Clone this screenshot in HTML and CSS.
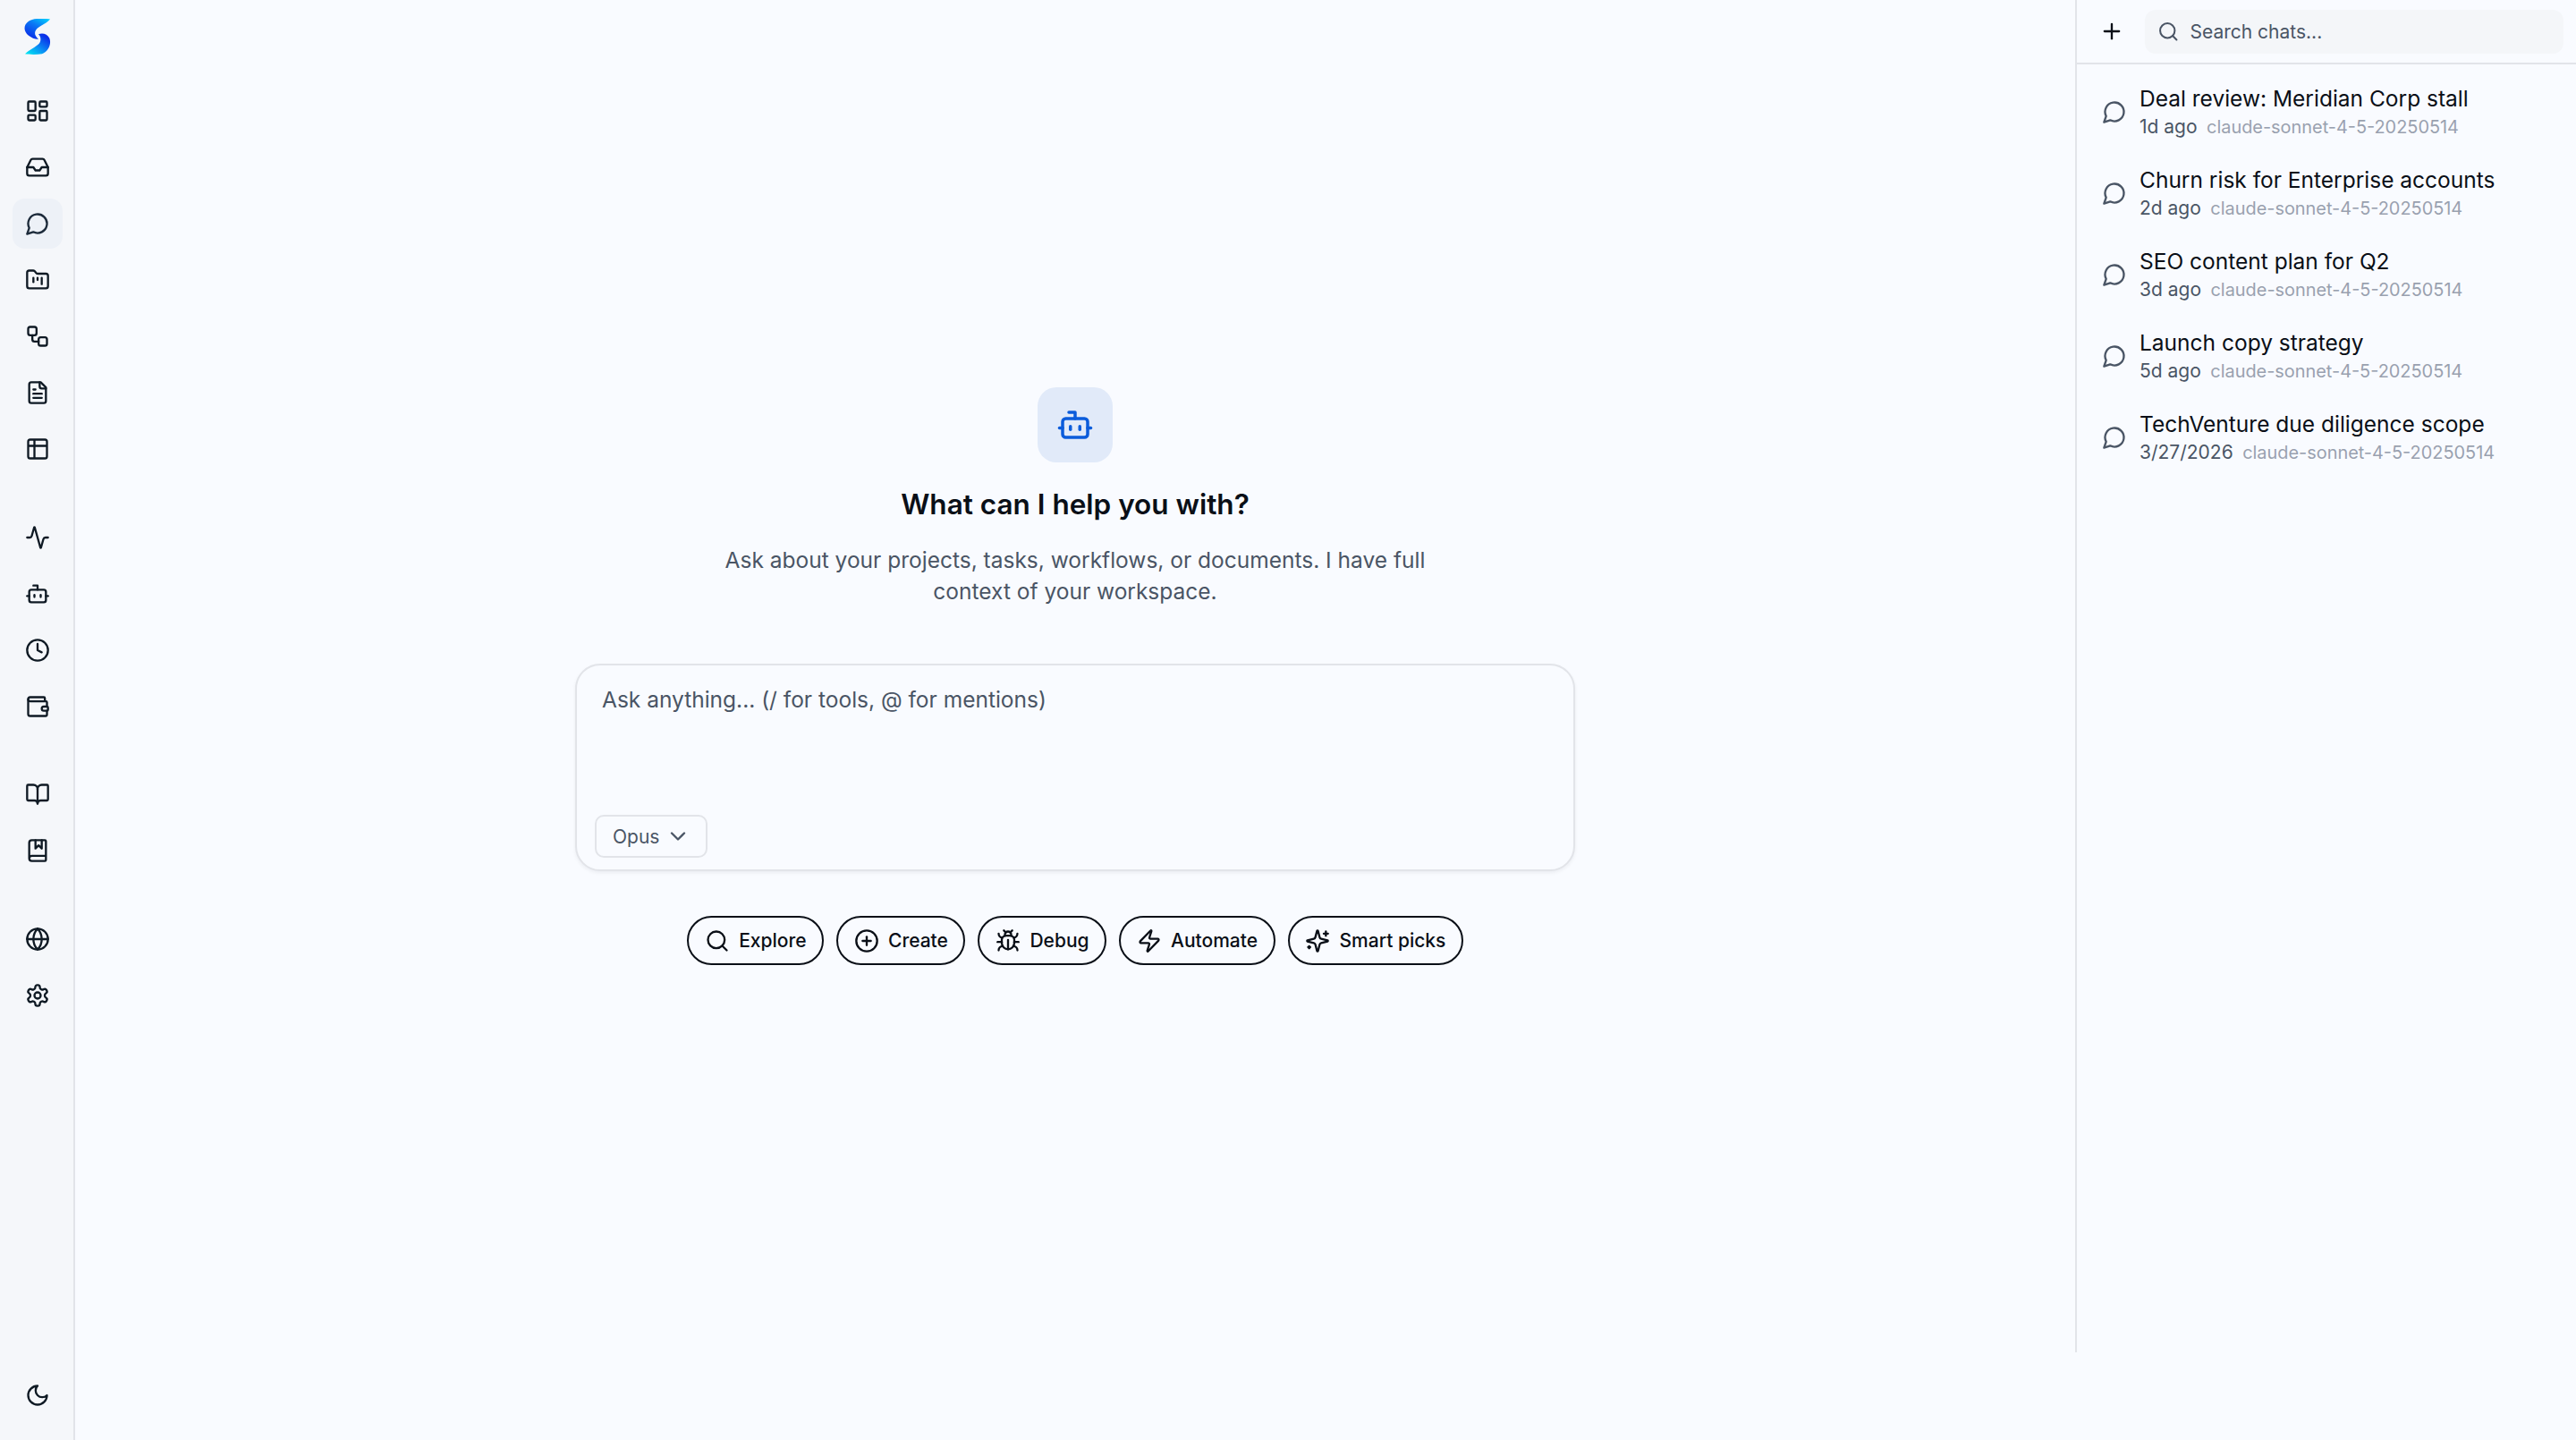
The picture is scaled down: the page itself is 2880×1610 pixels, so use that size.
FILE: index.html
```html
<!DOCTYPE html>
<html lang="en">
<head>
<meta charset="utf-8">
<title>Chat</title>
<link rel="stylesheet" href="styles.css">
</head>
<body>
<svg class="defs" aria-hidden="true">
  <defs>
    <linearGradient id="logoTop" x1="0.95" y1="0" x2="0.3" y2="1"><stop offset="0" stop-color="#00d4ff"/><stop offset="0.45" stop-color="#0a78f5"/><stop offset="1" stop-color="#0a2ee8"/></linearGradient>
    <linearGradient id="logoBottom" x1="0" y1="1" x2="0.75" y2="0.1"><stop offset="0" stop-color="#00f0f0"/><stop offset="0.5" stop-color="#0a90f5"/><stop offset="1" stop-color="#0a30e8"/></linearGradient>
    <symbol id="i-dashboard" viewBox="0 0 24 24"><rect x="3" y="3" width="7" height="9" rx="1"/><rect x="14" y="3" width="7" height="5" rx="1"/><rect x="14" y="12" width="7" height="9" rx="1"/><rect x="3" y="16" width="7" height="5" rx="1"/></symbol>
    <symbol id="i-inbox" viewBox="0 0 24 24"><polyline points="22 12 16 12 14 15 10 15 8 12 2 12"/><path d="M5.45 5.11 2 12v6a2 2 0 0 0 2 2h16a2 2 0 0 0 2-2v-6l-3.45-6.89A2 2 0 0 0 16.76 4H7.24a2 2 0 0 0-1.79 1.11z"/></symbol>
    <symbol id="i-chat" viewBox="0 0 24 24"><path d="M7.9 20A9 9 0 1 0 4 16.1L2 22Z"/></symbol>
    <symbol id="i-folder" viewBox="0 0 24 24"><path d="M4 20h16a2 2 0 0 0 2-2V8a2 2 0 0 0-2-2h-7.93a2 2 0 0 1-1.66-.9l-.82-1.2A2 2 0 0 0 7.93 3H4a2 2 0 0 0-2 2v13c0 1.1.9 2 2 2Z"/><path d="M8 10v4"/><path d="M12 10v2"/><path d="M16 10v6"/></symbol>
    <symbol id="i-workflow" viewBox="0 0 24 24"><rect x="3" y="3" width="8" height="8" rx="2"/><path d="M7 11v4a2 2 0 0 0 2 2h4"/><rect x="13" y="13" width="8" height="8" rx="2"/></symbol>
    <symbol id="i-file" viewBox="0 0 24 24"><path d="M15 2H6a2 2 0 0 0-2 2v16a2 2 0 0 0 2 2h12a2 2 0 0 0 2-2V7Z"/><path d="M14 2v4a2 2 0 0 0 2 2h4"/><path d="M10 9H8"/><path d="M16 13H8"/><path d="M16 17H8"/></symbol>
    <symbol id="i-table" viewBox="0 0 24 24"><path d="M9 3H5a2 2 0 0 0-2 2v4m6-6h10a2 2 0 0 1 2 2v4M9 3v18m0 0h10a2 2 0 0 0 2-2V9M9 21H5a2 2 0 0 1-2-2V9m0 0h18"/></symbol>
    <symbol id="i-activity" viewBox="0 0 24 24"><path d="M22 12h-2.48a2 2 0 0 0-1.93 1.46l-2.35 8.36a.25.25 0 0 1-.48 0L9.24 2.18a.25.25 0 0 0-.48 0l-2.35 8.36A2 2 0 0 1 4.49 12H2"/></symbol>
    <symbol id="i-bot" viewBox="0 0 24 24"><path d="M12 8V4H8"/><rect x="4" y="8" width="16" height="12" rx="2"/><path d="M2 14h2"/><path d="M20 14h2"/><path d="M15 13v2"/><path d="M9 13v2"/></symbol>
    <symbol id="i-clock" viewBox="0 0 24 24"><circle cx="12" cy="12" r="10"/><polyline points="12 6 12 12 16 14"/></symbol>
    <symbol id="i-wallet" viewBox="0 0 24 24"><path d="M19 7V4a1 1 0 0 0-1-1H5a2 2 0 0 0 0 4h15a1 1 0 0 1 1 1v4h-3a2 2 0 0 0 0 4h3a1 1 0 0 0 1-1v-2a1 1 0 0 0-1-1"/><path d="M3 5v14a2 2 0 0 0 2 2h15a1 1 0 0 0 1-1v-4"/></symbol>
    <symbol id="i-book" viewBox="0 0 24 24"><path d="M12 7v14"/><path d="M3 18a1 1 0 0 1-1-1V4a1 1 0 0 1 1-1h5a4 4 0 0 1 4 4 4 4 0 0 1 4-4h5a1 1 0 0 1 1 1v13a1 1 0 0 1-1 1h-6a3 3 0 0 0-3 3 3 3 0 0 0-3-3z"/></symbol>
    <symbol id="i-bookmark" viewBox="0 0 24 24"><path d="M10 2v8l3-3 3 3V2"/><path d="M4 19.5v-15A2.5 2.5 0 0 1 6.5 2H19a1 1 0 0 1 1 1v18a1 1 0 0 1-1 1H6.5a1 1 0 0 1 0-5H20"/></symbol>
    <symbol id="i-globe" viewBox="0 0 24 24"><circle cx="12" cy="12" r="10"/><path d="M12 2a14.5 14.5 0 0 0 0 20 14.5 14.5 0 0 0 0-20"/><path d="M2 12h20"/></symbol>
    <symbol id="i-settings" viewBox="0 0 24 24"><path d="M12.22 2h-.44a2 2 0 0 0-2 2v.18a2 2 0 0 1-1 1.73l-.43.25a2 2 0 0 1-2 0l-.15-.08a2 2 0 0 0-2.73.73l-.22.38a2 2 0 0 0 .73 2.73l.15.1a2 2 0 0 1 1 1.72v.51a2 2 0 0 1-1 1.74l-.15.09a2 2 0 0 0-.73 2.73l.22.38a2 2 0 0 0 2.73.73l.15-.08a2 2 0 0 1 2 0l.43.25a2 2 0 0 1 1 1.73V20a2 2 0 0 0 2 2h.44a2 2 0 0 0 2-2v-.18a2 2 0 0 1 1-1.73l.43-.25a2 2 0 0 1 2 0l.15.08a2 2 0 0 0 2.73-.73l.22-.39a2 2 0 0 0-.73-2.73l-.15-.08a2 2 0 0 1-1-1.74v-.5a2 2 0 0 1 1-1.74l.15-.09a2 2 0 0 0 .73-2.73l-.22-.38a2 2 0 0 0-2.73-.73l-.15.08a2 2 0 0 1-2 0l-.43-.25a2 2 0 0 1-1-1.73V4a2 2 0 0 0-2-2z"/><circle cx="12" cy="12" r="3"/></symbol>
    <symbol id="i-moon" viewBox="0 0 24 24"><path d="M12 3a6 6 0 0 0 9 9 9 9 0 1 1-9-9Z"/></symbol>
    <symbol id="i-search" viewBox="0 0 24 24"><circle cx="11" cy="11" r="8"/><path d="m21 21-4.3-4.3"/></symbol>
    <symbol id="i-plus" viewBox="0 0 24 24"><path d="M5 12h14"/><path d="M12 5v14"/></symbol>
    <symbol id="i-chevron" viewBox="0 0 24 24"><path d="m6 9 6 6 6-6"/></symbol>
    <symbol id="i-circle-plus" viewBox="0 0 24 24"><circle cx="12" cy="12" r="10"/><path d="M8 12h8"/><path d="M12 8v8"/></symbol>
    <symbol id="i-bug" viewBox="0 0 24 24"><path d="m8 2 1.88 1.88"/><path d="M14.12 3.88 16 2"/><path d="M9 7.13v-1a3.003 3.003 0 1 1 6 0v1"/><path d="M12 20c-3.3 0-6-2.7-6-6v-3a4 4 0 0 1 4-4h4a4 4 0 0 1 4 4v3c0 3.3-2.7 6-6 6"/><path d="M12 20v-9"/><path d="M6.53 9C4.6 8.8 3 7.1 3 5"/><path d="M6 13H2"/><path d="M3 21c0-2.1 1.7-3.9 3.8-4"/><path d="M20.97 5c0 2.1-1.6 3.8-3.5 4"/><path d="M22 13h-4"/><path d="M17.2 17c2.1.1 3.8 1.9 3.8 4"/></symbol>
    <symbol id="i-zap" viewBox="0 0 24 24"><path d="M4 14a1 1 0 0 1-.78-1.63l9.9-10.2a.5.5 0 0 1 .86.46l-1.92 6.02A1 1 0 0 0 13 10h7a1 1 0 0 1 .78 1.63l-9.9 10.2a.5.5 0 0 1-.86-.46l1.92-6.02A1 1 0 0 0 11 14z"/></symbol>
    <symbol id="i-sparkles" viewBox="0 0 24 24"><path d="M9.937 15.5A2 2 0 0 0 8.5 14.063l-6.135-1.582a.5.5 0 0 1 0-.962L8.5 9.936A2 2 0 0 0 9.937 8.5l1.582-6.135a.5.5 0 0 1 .963 0L14.063 8.5A2 2 0 0 0 15.5 9.937l6.135 1.581a.5.5 0 0 1 0 .964L15.5 14.063a2 2 0 0 0-1.437 1.437l-1.582 6.135a.5.5 0 0 1-.963 0z"/><path d="M20 3v4"/><path d="M22 5h-4"/><path d="M4 17v2"/><path d="M5 18H3"/></symbol>
  </defs>
</svg>

<aside class="sidebar">
  <svg class="logo" viewBox="0 0 90 120" aria-label="Logo">
    <path fill="url(#logoTop)" d="M87 1C60-2 30-2 15 8C-3 20-3 42 15 56C25 64 40 70 48 68C32 55 32 40 50 28C62 20 78 14 87 1Z"/>
    <path fill="url(#logoBottom)" d="M48 52C60 46 78 50 85 65C92 85 82 108 60 118C40 121 15 120 3 118C15 105 30 100 45 88C58 78 58 62 48 52Z"/>
  </svg>
  <nav class="nav">
    <div class="nav-group">
      <a class="nav-item"><svg class="icon"><use href="#i-dashboard"/></svg></a>
      <a class="nav-item"><svg class="icon"><use href="#i-inbox"/></svg></a>
      <a class="nav-item is-active"><svg class="icon"><use href="#i-chat"/></svg></a>
      <a class="nav-item"><svg class="icon"><use href="#i-folder"/></svg></a>
      <a class="nav-item"><svg class="icon"><use href="#i-workflow"/></svg></a>
      <a class="nav-item"><svg class="icon"><use href="#i-file"/></svg></a>
      <a class="nav-item"><svg class="icon"><use href="#i-table"/></svg></a>
    </div>
    <div class="nav-group">
      <a class="nav-item"><svg class="icon"><use href="#i-activity"/></svg></a>
      <a class="nav-item"><svg class="icon"><use href="#i-bot"/></svg></a>
      <a class="nav-item"><svg class="icon"><use href="#i-clock"/></svg></a>
      <a class="nav-item"><svg class="icon"><use href="#i-wallet"/></svg></a>
    </div>
    <div class="nav-group">
      <a class="nav-item"><svg class="icon"><use href="#i-book"/></svg></a>
      <a class="nav-item"><svg class="icon"><use href="#i-bookmark"/></svg></a>
    </div>
    <div class="nav-group">
      <a class="nav-item"><svg class="icon"><use href="#i-globe"/></svg></a>
      <a class="nav-item"><svg class="icon"><use href="#i-settings"/></svg></a>
    </div>
  </nav>
  <a class="nav-item theme-toggle"><svg class="icon"><use href="#i-moon"/></svg></a>
</aside>

<div class="content">
  <div class="workspace">
    <main class="main">
      <div class="hero-icon"><svg class="hero-glyph"><use href="#i-bot"/></svg></div>
      <h1 class="hero-title">What can I help you with?</h1>
      <p class="hero-text">Ask about your projects, tasks, workflows, or documents. I have full context of your workspace.</p>
      <div class="composer">
        <div class="composer-input">Ask anything... (/ for tools, @ for mentions)</div>
        <div class="composer-bar">
          <button class="model-btn">Opus<svg class="chevron"><use href="#i-chevron"/></svg></button>
        </div>
      </div>
      <div class="pills">
        <button class="pill"><svg class="pill-icon"><use href="#i-search"/></svg>Explore</button>
        <button class="pill"><svg class="pill-icon"><use href="#i-circle-plus"/></svg>Create</button>
        <button class="pill"><svg class="pill-icon"><use href="#i-bug"/></svg>Debug</button>
        <button class="pill"><svg class="pill-icon"><use href="#i-zap"/></svg>Automate</button>
        <button class="pill"><svg class="pill-icon"><use href="#i-sparkles"/></svg>Smart picks</button>
      </div>
    </main>
    <aside class="panel">
      <header class="panel-head">
        <button class="new-chat"><svg class="plus"><use href="#i-plus"/></svg></button>
        <div class="search"><svg class="search-icon"><use href="#i-search"/></svg><span>Search chats...</span></div>
      </header>
      <ul class="chats">
        <li class="chat"><svg class="chat-icon"><use href="#i-chat"/></svg><div><div class="chat-title">Deal review: Meridian Corp stall</div><div class="chat-meta"><span class="chat-time">1d ago</span><span class="chat-model">claude-sonnet-4-5-20250514</span></div></div></li>
        <li class="chat"><svg class="chat-icon"><use href="#i-chat"/></svg><div><div class="chat-title">Churn risk for Enterprise accounts</div><div class="chat-meta"><span class="chat-time">2d ago</span><span class="chat-model">claude-sonnet-4-5-20250514</span></div></div></li>
        <li class="chat"><svg class="chat-icon"><use href="#i-chat"/></svg><div><div class="chat-title">SEO content plan for Q2</div><div class="chat-meta"><span class="chat-time">3d ago</span><span class="chat-model">claude-sonnet-4-5-20250514</span></div></div></li>
        <li class="chat"><svg class="chat-icon"><use href="#i-chat"/></svg><div><div class="chat-title">Launch copy strategy</div><div class="chat-meta"><span class="chat-time">5d ago</span><span class="chat-model">claude-sonnet-4-5-20250514</span></div></div></li>
        <li class="chat"><svg class="chat-icon"><use href="#i-chat"/></svg><div><div class="chat-title">TechVenture due diligence scope</div><div class="chat-meta"><span class="chat-time">3/27/2026</span><span class="chat-model">claude-sonnet-4-5-20250514</span></div></div></li>
      </ul>
    </aside>
  </div>
</div>
</body>
</html>
```

FILE: styles.css
```css
* { box-sizing: border-box; }
html, body { height: 100%; }
body {
  margin: 0;
  display: flex;
  background: #f9fbff;
  color: #0a0f17;
  font-family: "Inter", "Liberation Sans", sans-serif;
  overflow: hidden;
}
button { font: inherit; color: inherit; background: none; cursor: pointer; }
svg { fill: none; stroke: currentColor; stroke-linecap: round; stroke-linejoin: round; }
.defs { width: 0; height: 0; position: absolute; }

.sidebar {
  width: 84px;
  flex: none;
  height: 100%;
  display: flex;
  flex-direction: column;
  align-items: center;
  background: #f5f7fa;
  border-right: 2px solid #e2e4e9;
  padding: 21px 0 22px 2px;
}
.logo { width: 30px; height: 40px; stroke: none; flex: none; }
.nav { display: flex; flex-direction: column; gap: 42.5px; margin-top: 35px; }
.nav-group { display: flex; flex-direction: column; gap: 7px; }
.nav-item {
  width: 56px;
  height: 56px;
  display: flex;
  align-items: center;
  justify-content: center;
  border-radius: 14px;
  color: #0f1a24;
}
.nav-item.is-active { background: #edf1f7; color: #1c2a3a; }
.theme-toggle { margin-top: auto; }
.icon { width: 28px; height: 28px; stroke-width: 2; }

.content { flex: 1; min-width: 0; }
.workspace { display: flex; height: 1512px; }
.main {
  flex: 1;
  min-width: 0;
  display: flex;
  flex-direction: column;
  align-items: center;
  justify-content: center;
}
.hero-icon {
  width: 84px;
  height: 84px;
  border-radius: 21px;
  background: #e1eaf9;
  display: flex;
  align-items: center;
  justify-content: center;
  color: #0b5cdb;
}
.hero-glyph { width: 42px; height: 42px; stroke-width: 2; }
.hero-title {
  margin: 27px 0 0;
  font-size: 31.5px;
  line-height: 40px;
  font-weight: 600;
}
.hero-text {
  margin: 25px 0 0;
  width: 784px;
  text-align: center;
  font-size: 24.5px;
  line-height: 35px;
  color: #4a5565;
}
.composer {
  margin-top: 63px;
  width: 1118px;
  height: 232px;
  border: 2px solid #e2e4e9;
  border-radius: 28px;
  background: #f9fbff;
  box-shadow: 0 2px 4px rgba(15, 23, 42, 0.06);
  display: flex;
  flex-direction: column;
  justify-content: space-between;
  padding: 21px 20px 13px;
}
.composer-input {
  padding-left: 8px;
  font-size: 24.5px;
  line-height: 35px;
  color: #4a5565;
}
.composer-bar { display: flex; }
.model-btn {
  height: 48px;
  padding: 0 16.5px 0 18px;
  display: flex;
  align-items: center;
  gap: 7px;
  border: 2px solid #e2e4e9;
  border-radius: 10px;
  font-size: 21px;
  color: #4a5565;
}
.chevron { width: 28px; height: 28px; stroke-width: 2; }
.pills { display: flex; gap: 14px; margin-top: 50px; }
.pill {
  height: 55px;
  display: flex;
  align-items: center;
  gap: 10.5px;
  padding: 0 17.5px;
  border: 2px solid #0a0f17;
  border-radius: 28px;
  font-size: 21px;
  font-weight: 500;
  white-space: nowrap;
}
.pill-icon { width: 28px; height: 28px; stroke-width: 2; }

.panel {
  width: 560px;
  flex: none;
  border-left: 2px solid #e2e4e9;
}
.panel-head {
  height: 72px;
  display: flex;
  align-items: center;
  gap: 16px;
  padding: 0 14px 0 18px;
  border-bottom: 2px solid #e2e4e9;
}
.new-chat { border: 0; padding: 0; width: 42px; height: 42px; display: flex; align-items: center; justify-content: center; }
.plus { width: 28px; height: 28px; stroke-width: 2; }
.search {
  flex: 1;
  height: 49px;
  display: flex;
  align-items: center;
  gap: 12px;
  padding-left: 14px;
  background: #f4f6f9;
  border-radius: 12px;
  font-size: 21px;
  color: #4a5565;
}
.search-icon { width: 24.5px; height: 24.5px; stroke-width: 2; }
.chats { list-style: none; margin: 0; padding: 7px 0 0; }
.chat {
  height: 91px;
  display: flex;
  align-items: center;
  gap: 14px;
  padding-left: 28px;
}
.chat-icon { width: 28px; height: 28px; flex: none; stroke-width: 2; color: #4a5565; }
.chat-title { font-size: 24.5px; line-height: 35px; white-space: nowrap; }
.chat-meta { display: flex; align-items: baseline; gap: 10.5px; font-size: 21px; line-height: 28px; }
.chat-time { color: #4a5565; }
.chat-model { color: #99a1af; font-size: 19.9px; }
```
